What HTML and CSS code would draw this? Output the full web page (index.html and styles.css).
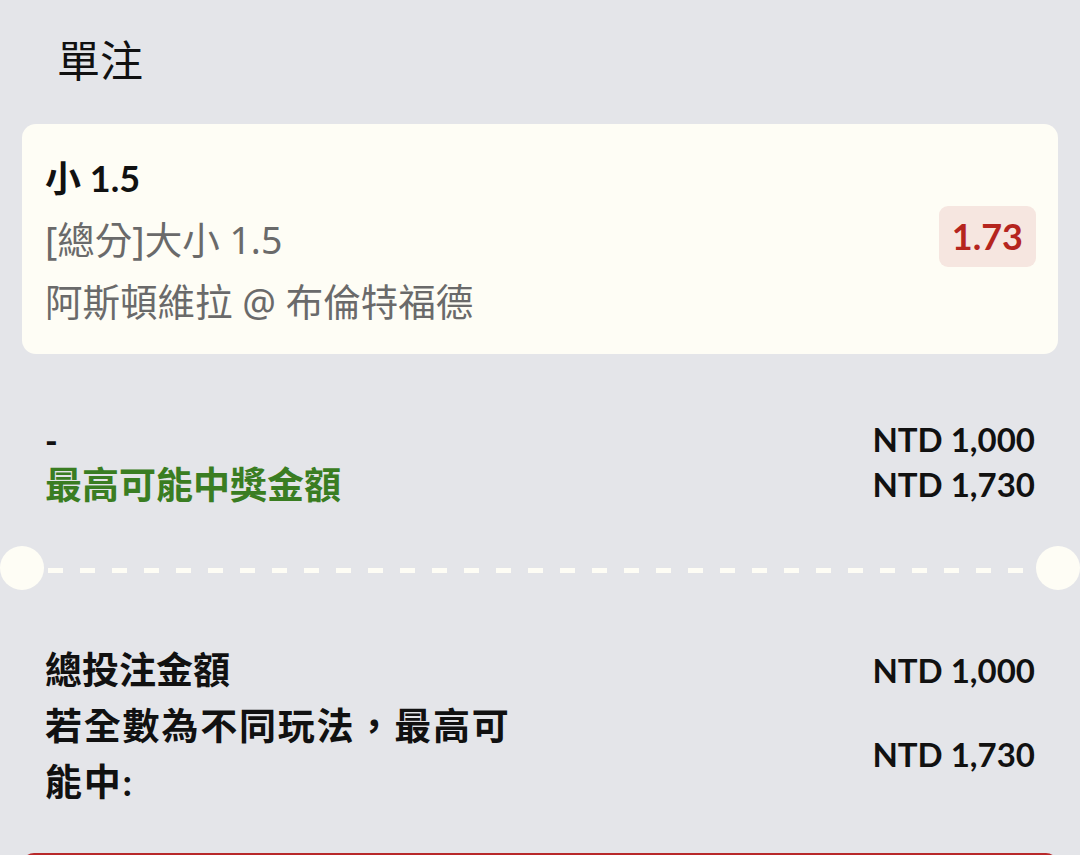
FILE: index.html
```html
<!DOCTYPE html>
<html lang="zh-Hant">
<head>
  <meta charset="UTF-8" />
  <meta name="viewport" content="width=device-width, initial-scale=1.0"/>
  <title>單注</title>
  <link rel="stylesheet" href="styles.css">
</head>
<body>
  <h1 class="page-title">單注</h1>

  <div class="bet-card">
    <div class="bet-info">
      <div class="pick">小 1.5</div>
      <div class="market">[總分]大小 1.5</div>
      <div class="match">阿斯頓維拉 @ 布倫特福德</div>
    </div>
    <div class="odds">1.73</div>
  </div>

  <div class="stake-block">
    <div class="stake-labels">
      <div class="stake-input">-</div>
      <div class="win-label">最高可能中獎金額</div>
    </div>
    <div class="stake-values">
      <div class="amount">NTD 1,000</div>
      <div class="amount">NTD 1,730</div>
    </div>
  </div>

  <div class="ticket-cut">
    <span class="notch"></span>
    <span class="dashes"></span>
    <span class="notch"></span>
  </div>

  <div class="summary">
    <div class="summary-row">
      <div class="summary-label">總投注金額</div>
      <div class="amount">NTD 1,000</div>
    </div>
    <div class="summary-row">
      <div class="summary-label wide">若全數為不同玩法，最高可能中:</div>
      <div class="amount">NTD 1,730</div>
    </div>
  </div>

  <button class="place-btn" aria-label="投注"></button>
</body>
</html>
```

FILE: styles.css
```css
* { box-sizing: border-box; margin: 0; padding: 0; }
body {
  font-family: Lato, "Noto Sans CJK TC", sans-serif;
  background-color: #E4E5E9;
  color: #111;
  width: 1080px;
  height: 855px;
  overflow: hidden;
}
.page-title {
  font-family: "Noto Sans CJK TC", sans-serif;
  font-size: 43px;
  font-weight: 400;
  line-height: 42px;
  padding: 37px 0 0 57px;
  margin-bottom: 45px;
  color: #111;
}
.bet-card {
  margin: 0 22px;
  height: 230px;
  background: #FEFDF5;
  border-radius: 14px;
  padding: 23px 22px 21px 23px;
  display: flex;
  align-items: center;
  justify-content: space-between;
}
.bet-info {
  align-self: stretch;
  font-size: 36px;
  line-height: 62px;
}
.pick {
  font-weight: 700;
  color: #111;
}
.market, .match {
  font-family: "Noto Sans", "Noto Sans CJK TC", sans-serif;
  font-size: 37.5px;
  color: #6A6A6A;
}
.odds {
  background: #F6E6E0;
  color: #B5251E;
  font-weight: 700;
  font-size: 36px;
  line-height: 61px;
  padding: 0 13px;
  border-radius: 9px;
  margin-top: -8px;
}
.stake-block {
  margin-top: 63px;
  padding: 0 45px;
  display: flex;
  justify-content: space-between;
  line-height: 45px;
}
.stake-input {
  font-size: 34px;
  font-weight: 900;
}
.win-label {
  font-size: 37px;
  font-weight: 700;
  color: #3A7D22;
}
.stake-values {
  text-align: right;
}
.amount {
  font-size: 33px;
  font-weight: 700;
  color: #111;
}
.ticket-cut {
  margin-top: 39px;
  display: flex;
  align-items: center;
  height: 44px;
}
.notch {
  width: 44px;
  height: 44px;
  border-radius: 50%;
  background: #FEFDF5;
  flex: none;
}
.dashes {
  flex: 1;
  height: 5px;
  margin: 4px 4px 0;
  background: repeating-linear-gradient(90deg, #FEFDF5 0 15px, transparent 15px 32px);
}
.summary {
  margin-top: 52px;
  padding: 0 45px;
}
.summary-row {
  display: flex;
  justify-content: space-between;
  align-items: center;
}
.summary-label {
  font-size: 37px;
  font-weight: 700;
  line-height: 56px;
  width: 500px;
}
.summary-label.wide {
  letter-spacing: 1.8px;
}
.place-btn {
  display: block;
  margin: 43px 22px 0;
  width: 1036px;
  height: 60px;
  border: none;
  border-radius: 12px;
  background: #B8282A;
}
```
